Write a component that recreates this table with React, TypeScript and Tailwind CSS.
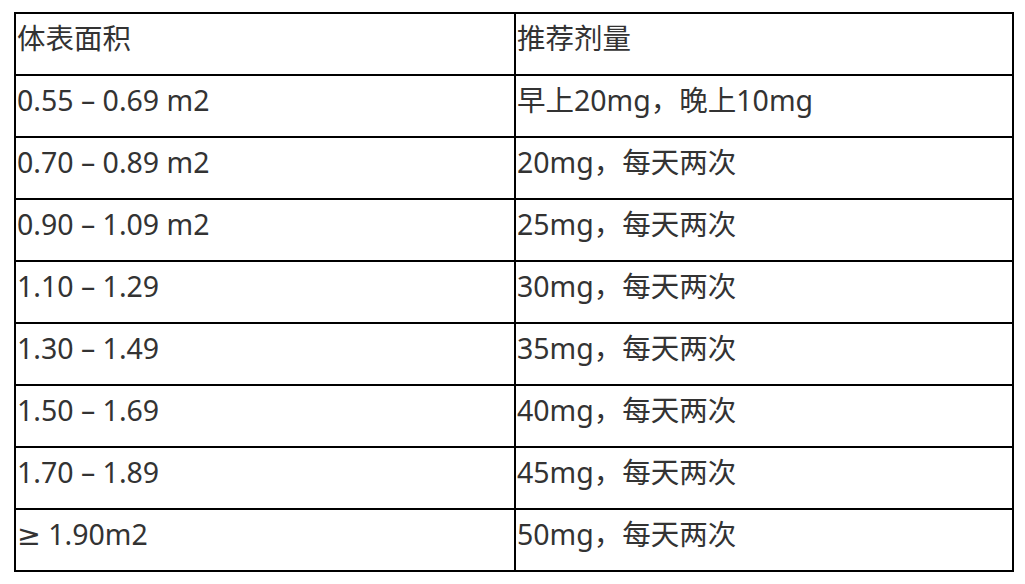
const rows: [string, string][] = [
  ["体表面积", "推荐剂量"],
  ["0.55 – 0.69 m2", "早上20mg，晚上10mg"],
  ["0.70 – 0.89 m2", "20mg，每天两次"],
  ["0.90 – 1.09 m2", "25mg，每天两次"],
  ["1.10 – 1.29", "30mg，每天两次"],
  ["1.30 – 1.49", "35mg，每天两次"],
  ["1.50 – 1.69", "40mg，每天两次"],
  ["1.70 – 1.89", "45mg，每天两次"],
  ["≥ 1.90m2", "50mg，每天两次"],
];

export default function App() {
  return (
    <div className="w-[1025px] h-[584px] bg-white pt-[12px] pl-[14px]">
      <table
        className="border-collapse text-[28.5px] text-[#333333] w-[1000px]"
        style={{ fontFamily: '"Noto Sans", "DejaVu Sans", "Noto Sans CJK SC", sans-serif' }}
      >
        <tbody>
          {rows.map(([a, b], i) => (
            <tr key={i} className="h-[62px]">
              <td className="w-[500px] border-2 border-black align-top pl-[1px] pt-[4px] leading-[40px]">
                {a.startsWith("≥") ? (
                  <>
                    <span style={{ fontFamily: '"DejaVu Sans", sans-serif' }}>≥</span>
                    {a.slice(1)}
                  </>
                ) : (
                  a
                )}
              </td>
              <td className="border-2 border-black align-top pl-[1px] pt-[4px] leading-[40px]">
                {b}
              </td>
            </tr>
          ))}
        </tbody>
      </table>
    </div>
  );
}
